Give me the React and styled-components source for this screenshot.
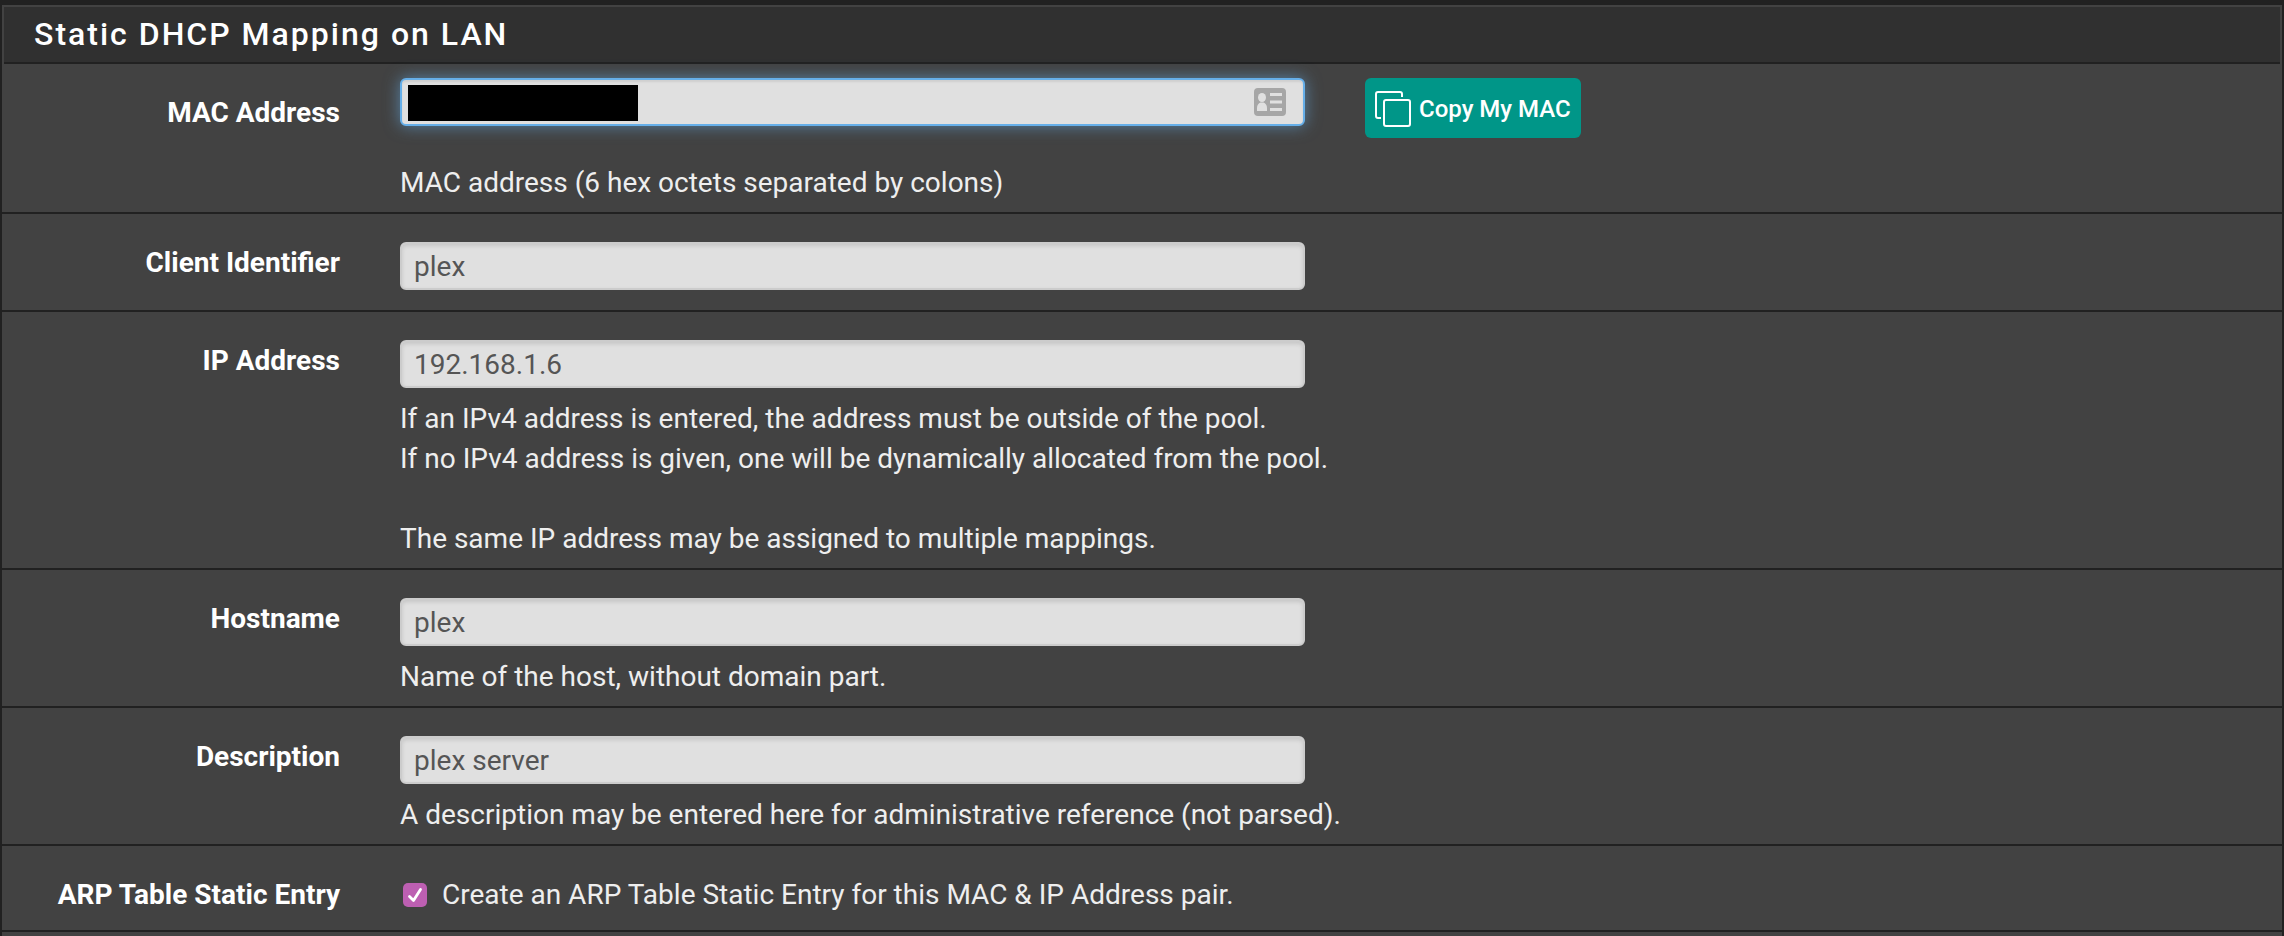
import React from "react";
import styled, { createGlobalStyle, css } from "styled-components";

const GlobalStyle = createGlobalStyle`
  *, *::before, *::after { box-sizing: border-box; }
  body {
    margin: 0;
    background: #212121;
    color: #eeeeee;
    font-family: Roboto, "Liberation Sans", sans-serif;
    font-size: 28px;
    line-height: 40px;
    overflow: hidden;
  }
`;

const Panel = styled.form`
  margin: 5px 2px 0;
  padding: 2px 0 20px;
  background: #424242;
`;

const PanelHeading = styled.header`
  margin: 0 2px;
  padding: 7px 30px 8px;
  background: #303030;
  border-bottom: 2px solid #212121;
`;

const PanelTitle = styled.h2`
  margin: 0;
  color: #ffffff;
  font-size: 32px;
  font-weight: 500;
  line-height: 40px;
  letter-spacing: 2px;
`;

const rowPadding = {
  plain: "28px 0 20px",
  help: "28px 0 9px",
  action: "14px 0 9px",
  check: "28px 0 15px",
};

const FormRow = styled.div`
  display: grid;
  grid-template-columns: 338fr 905fr 917fr;
  column-gap: 60px;
  align-items: start;
  padding: ${(p) => rowPadding[p.$kind]};
  border-bottom: 2px solid #212121;
`;

const RowLabel = styled.label`
  padding-top: ${(p) => (p.$lowered ? "15px" : "1px")};
  color: #ffffff;
  font-weight: 700;
  text-align: right;
`;

const focusRing = css`
  border-color: #66afe9;
  box-shadow: inset 0 2px 2px rgba(0, 0, 0, 0.075), 0 0 16px rgba(102, 175, 233, 0.6);
`;

const TextInput = styled.input`
  display: block;
  width: 100%;
  height: 48px;
  padding: 0 12px;
  border: 2px solid #cccccc;
  border-radius: 6px;
  outline: none;
  background: #e0e0e0;
  box-shadow: inset 0 2px 4px rgba(0, 0, 0, 0.12);
  color: #555555;
  font: inherit;
  ${(p) => p.$focused && focusRing}
`;

const InputWrap = styled.div`
  position: relative;
`;

const Redaction = styled.span`
  position: absolute;
  top: 7px;
  left: 8px;
  width: 230px;
  height: 36px;
  background: #000000;
`;

const CardIcon = styled.svg`
  position: absolute;
  top: 10px;
  right: 19px;
  width: 32px;
  height: 28px;
`;

const CopyButton = styled.button`
  display: flex;
  align-items: center;
  justify-self: start;
  gap: 8px;
  height: 60px;
  padding: 2px 10px 0;
  border: 0;
  border-radius: 6px;
  background: #009688;
  color: #ffffff;
  font: 500 24px/36px Roboto, "Liberation Sans", sans-serif;
`;

const CopyIcon = styled.svg`
  width: 36px;
  height: 36px;
`;

const HelpText = styled.p`
  grid-column: 2 / -1;
  margin: ${(p) => (p.$spaced ? "25px" : "11px")} 0 0;
`;

const CheckLabel = styled.label`
  grid-column: 2 / -1;
  display: flex;
  align-items: center;
  gap: 15px;
  padding: 1px 0 0 3px;
`;

const Checkbox = styled.input`
  appearance: none;
  width: 24px;
  height: 24px;
  margin: 0;
  border-radius: 5px;
  background: #bd5fb2
    url("data:image/svg+xml,%3Csvg xmlns='http://www.w3.org/2000/svg' viewBox='0 0 24 24'%3E%3Cpath d='M6.500 13.500l4 4L17.500 6.500' fill='none' stroke='white' stroke-width='2.800' stroke-linecap='round' stroke-linejoin='round'/%3E%3C/svg%3E");
`;

const fields = [
  { id: "clientId", label: "Client Identifier", value: "plex" },
  {
    id: "ipAddress",
    label: "IP Address",
    value: "192.168.1.6",
    help: [
      "If an IPv4 address is entered, the address must be outside of the pool.",
      "If no IPv4 address is given, one will be dynamically allocated from the pool.",
      "",
      "The same IP address may be assigned to multiple mappings.",
    ],
  },
  { id: "hostname", label: "Hostname", value: "plex", help: ["Name of the host, without domain part."] },
  {
    id: "description",
    label: "Description",
    value: "plex server",
    help: ["A description may be entered here for administrative reference (not parsed)."],
  },
];

function Lines({ lines }) {
  return lines.map((line, i) => (
    <React.Fragment key={i}>
      {i > 0 && <br />}
      {line}
    </React.Fragment>
  ));
}

export default function App() {
  return (
    <>
      <GlobalStyle />
      <Panel>
        <PanelHeading>
          <PanelTitle>Static DHCP Mapping on LAN</PanelTitle>
        </PanelHeading>

        <FormRow $kind="action">
          <RowLabel htmlFor="mac" $lowered>MAC Address</RowLabel>
          <InputWrap>
            <TextInput id="mac" type="text" $focused />
            <Redaction />
            <CardIcon viewBox="0 0 32 28" aria-hidden="true">
              <rect width="32" height="28" rx="4" fill="#a6a6a6" />
              <g fill="#e0e0e0">
                <ellipse cx="8" cy="9.5" rx="4" ry="4.5" />
                <path d="M3 23v-3c0-3 1.5-4.5 3.5-5.500h3c2 1 3.5 2.5 3.5 5.500v3z" />
                <path d="M16 5h12v3H16zM16 12.500h12v3H16zM16 20h12v3H16z" />
              </g>
            </CardIcon>
          </InputWrap>
          <CopyButton type="button">
            <CopyIcon viewBox="0 0 36 36" fill="none" stroke="#ffffff" strokeWidth="2" aria-hidden="true">
              <path d="M6 27H3a2 2 0 0 1-2-2V3a2 2 0 0 1 2-2h22a2 2 0 0 1 2 2v3" />
              <rect x="9" y="9" width="26" height="26" rx="2" />
            </CopyIcon>
            Copy My MAC
          </CopyButton>
          <HelpText $spaced>MAC address (6 hex octets separated by colons)</HelpText>
        </FormRow>

        {fields.map((f) => (
          <FormRow key={f.id} $kind={f.help ? "help" : "plain"}>
            <RowLabel htmlFor={f.id}>{f.label}</RowLabel>
            <TextInput id={f.id} type="text" defaultValue={f.value} />
            {f.help && (
              <HelpText>
                <Lines lines={f.help} />
              </HelpText>
            )}
          </FormRow>
        ))}

        <FormRow $kind="check">
          <RowLabel htmlFor="arp">ARP Table Static Entry</RowLabel>
          <CheckLabel>
            <Checkbox id="arp" type="checkbox" defaultChecked />
            Create an ARP Table Static Entry for this MAC &amp; IP Address pair.
          </CheckLabel>
        </FormRow>
      </Panel>
    </>
  );
}
